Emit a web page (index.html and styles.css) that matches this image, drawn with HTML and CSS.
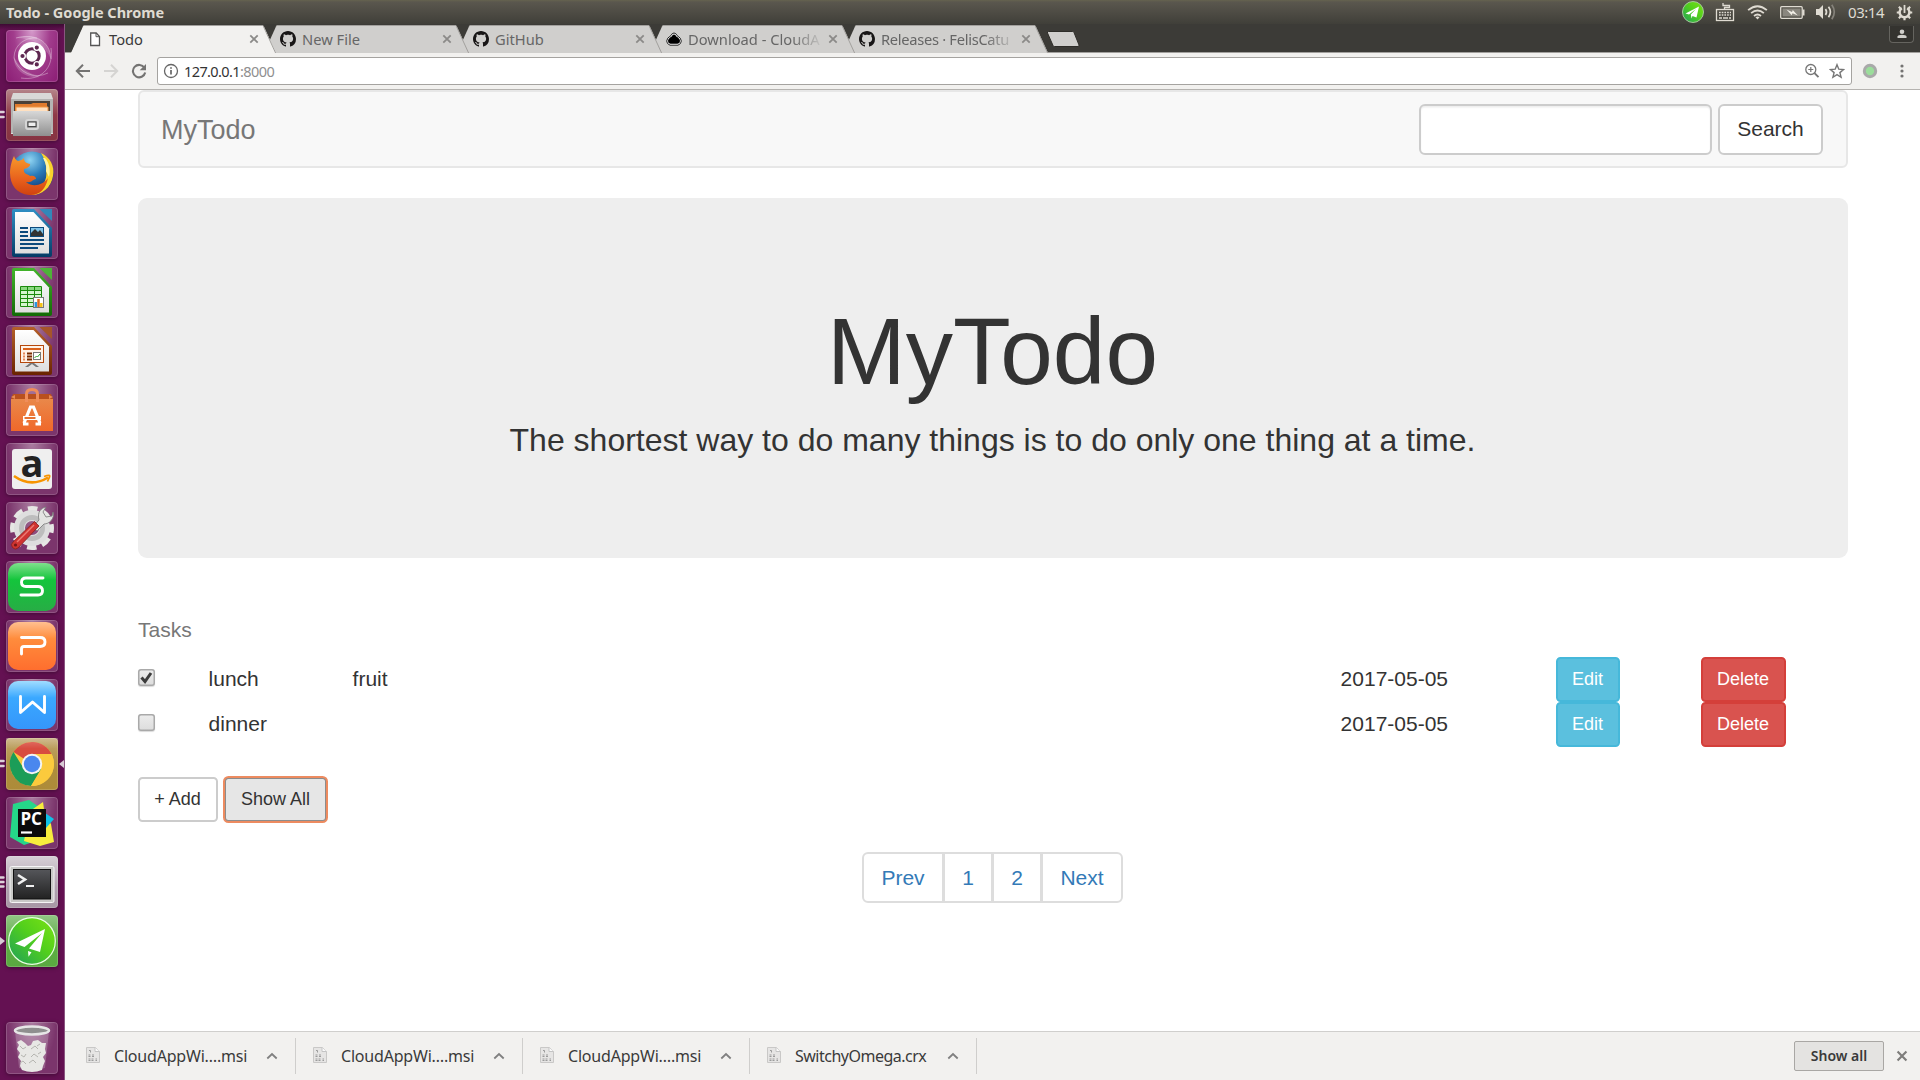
FILE: index.html
```html
<!DOCTYPE html>
<html lang="en">
<head>
<meta charset="utf-8">
<title>Todo</title>
<link rel="stylesheet" href="styles.css">
</head>
<body>
<svg class="defs" width="0" height="0" aria-hidden="true">
  <defs>
    <linearGradient id="gShine" x1="0" y1="0" x2="0" y2="1"><stop offset="0" stop-color="#fff" stop-opacity=".5"/><stop offset=".45" stop-color="#fff" stop-opacity="0"/></linearGradient>
    <linearGradient id="gSteel" x1="0" y1="0" x2="0" y2="1"><stop offset="0" stop-color="#d8d8d8"/><stop offset="1" stop-color="#8f8f8f"/></linearGradient>
    <linearGradient id="gPaper" x1="0" y1="0" x2="0" y2="1"><stop offset="0" stop-color="#fff"/><stop offset="1" stop-color="#dedede"/></linearGradient>
    <radialGradient id="gGlobe" cx=".45" cy=".2" r=".8"><stop offset="0" stop-color="#8fd4f2"/><stop offset=".45" stop-color="#2b7cba"/><stop offset="1" stop-color="#0a2a66"/></radialGradient>
    <linearGradient id="gFox" x1="0" y1="0" x2="0" y2="1"><stop offset="0" stop-color="#f79a2c"/><stop offset=".6" stop-color="#e8601c"/><stop offset="1" stop-color="#cf4210"/></linearGradient>
    <linearGradient id="gBlue" x1="0" y1="0" x2="0" y2="1"><stop offset="0" stop-color="#2f8fc4"/><stop offset="1" stop-color="#043b66"/></linearGradient>
    <linearGradient id="gGreen" x1="0" y1="0" x2="0" y2="1"><stop offset="0" stop-color="#43b52b"/><stop offset="1" stop-color="#126a06"/></linearGradient>
    <linearGradient id="gBrown" x1="0" y1="0" x2="0" y2="1"><stop offset="0" stop-color="#b5602a"/><stop offset="1" stop-color="#6a2400"/></linearGradient>
    <linearGradient id="gBag" x1="0" y1="0" x2="0" y2="1"><stop offset="0" stop-color="#e9884a"/><stop offset="1" stop-color="#f0682a"/></linearGradient>
    <linearGradient id="gWs" x1="0" y1="0" x2="0" y2="1"><stop offset="0" stop-color="#7fe08c"/><stop offset=".35" stop-color="#14c53c"/><stop offset="1" stop-color="#27ad45"/></linearGradient>
    <linearGradient id="gWp" x1="0" y1="0" x2="0" y2="1"><stop offset="0" stop-color="#ffc090"/><stop offset=".35" stop-color="#ff8c3c"/><stop offset="1" stop-color="#ff6e2e"/></linearGradient>
    <linearGradient id="gWw" x1="0" y1="0" x2="0" y2="1"><stop offset="0" stop-color="#a0dcff"/><stop offset=".35" stop-color="#3aa8ff"/><stop offset="1" stop-color="#3596fb"/></linearGradient>
    <linearGradient id="gTg" x1="1" y1="0" x2="0" y2="1"><stop offset="0" stop-color="#7be314"/><stop offset=".45" stop-color="#52cf1c"/><stop offset="1" stop-color="#1d9f5c"/></linearGradient>
    <linearGradient id="gTerm" x1="0" y1="0" x2="0" y2="1"><stop offset="0" stop-color="#55565a"/><stop offset="1" stop-color="#222"/></linearGradient>
    <symbol id="octocat" viewBox="0 0 16 16"><path fill="#181616" d="M8 0C3.58 0 0 3.58 0 8c0 3.54 2.29 6.53 5.47 7.59.4.07.55-.17.55-.38 0-.19-.01-.82-.01-1.49-2.01.37-2.53-.49-2.69-.94-.09-.23-.48-.94-.82-1.13-.28-.15-.68-.52-.01-.53.63-.01 1.08.58 1.23.82.72 1.21 1.87.87 2.33.66.07-.52.28-.87.51-1.07-1.78-.2-3.64-.89-3.64-3.95 0-.87.31-1.59.82-2.15-.08-.2-.36-1.02.08-2.12 0 0 .67-.21 2.2.82.64-.18 1.32-.27 2-.27s1.36.09 2 .27c1.53-1.04 2.2-.82 2.2-.82.44 1.1.16 1.92.08 2.12.51.56.82 1.27.82 2.15 0 3.07-1.87 3.75-3.65 3.95.29.25.54.73.54 1.48 0 1.07-.01 1.93-.01 2.2 0 .21.15.46.55.38A8.01 8.01 0 0 0 16 8c0-4.42-3.58-8-8-8z"/></symbol>
    <symbol id="close" viewBox="0 0 10 10"><path d="M1.3 1.3l7.4 7.4M8.7 1.3l-7.4 7.4" fill="none" stroke="currentColor" stroke-width="1.8"/></symbol>
    <symbol id="tabshape" viewBox="0 0 205 28"><path d="M0 28L12 1.6Q12.600 .5 13.800 .5H191Q192.200 .5 192.800 1.600L205 28" fill="currentColor"/><path d="M12.500 .5H192L204.600 28" fill="none" stroke="#a2a09d" stroke-width="1"/></symbol>
    <symbol id="binfile" viewBox="0 0 14 16"><path d="M.5.5h9l4 4v11H.5z" fill="#e6e5e4" stroke="#c9c8c7"/><path d="M9 .5v4h4.500" fill="#fafafa" stroke="#c4c4c4"/><path d="M3 3.500h1.500v2M2.500 8h2m1.500 0h2M2.500 9.500h2m1.500 0h2M2.500 12h2m1 0h2m2 0h1.500M2.500 13.500h2m1 0h2m2 0h1.500" stroke="#9b9b9b" fill="none"/></symbol>
    <symbol id="chev" viewBox="0 0 12 8"><path d="M1.300 6.500L6 2l4.700 4.500" fill="none" stroke="#808080" stroke-width="1.800"/></symbol>
    <symbol id="pips" viewBox="0 0 5 12"><path d="M0 3h3.500M0 8h3.500" stroke="#ddd2da" stroke-width="2.600" stroke-linecap="round"/></symbol>
  </defs>
</svg>

<div class="desktop">
  <header class="panel">
    <span class="panel-title">Todo - Google Chrome</span>
    <div class="indicators">
      <svg class="ind-tg" viewBox="0 0 22 22"><circle cx="11" cy="11" r="10.500" fill="url(#gTg)" stroke="#a6c79b"/><path d="M3.500 12.500L17 5.500l-2.500 11-4-1.500-1 2.500-.7-4L14 8l-7 5.500z" fill="#fff"/></svg>
      <svg class="ind-kb" viewBox="0 0 20 20"><path d="M9.500 7.500V5.500h5V3.500H8V1" fill="none" stroke="#dfdbd2" stroke-width="1.300"/><rect x="1.500" y="7.500" width="17" height="11" fill="none" stroke="#dfdbd2" stroke-width="1.300"/><path d="M4 10.500h12M4 13h12" stroke="#dfdbd2" stroke-width="1.700" stroke-dasharray="1.700 1"/><path d="M4 16h3m1 0h5m1 0h2" stroke="#dfdbd2" stroke-width="1.600"/></svg>
      <svg class="ind-wifi" viewBox="0 0 22 16"><g fill="none" stroke="#dfdbd2" stroke-width="2"><path d="M1 5.500Q11-3 21 5.500"/><path d="M4.200 8.700Q11 3 17.800 8.700"/><path d="M7.300 11.800Q11 8.500 14.700 11.800"/></g><path d="M8.800 13L11 15.500 13.200 13Q11 11.500 8.800 13z" fill="#dfdbd2"/></svg>
      <svg class="ind-bat" viewBox="0 0 25 13"><rect x=".7" y=".7" width="21.500" height="11.600" rx="1" fill="none" stroke="#dfdbd2" stroke-width="1.300"/><rect x="2.500" y="2.500" width="18" height="8" fill="#8a877f"/><rect x="22.500" y="3.500" width="2" height="6" fill="#dfdbd2"/><path d="M6.500 3.500L12 6l.8-2 5 5.500-5.300-2.300-.8 2z" fill="#f1eee6"/></svg>
      <svg class="ind-snd" viewBox="0 0 20 16"><path d="M0 5h3l4-4v14l-4-4H0z" fill="#dfdbd2"/><g fill="none" stroke="#dfdbd2" stroke-width="1.700"><path d="M9.500 5q2 3 0 6"/><path d="M12.500 2.800q3.800 5.200 0 10.400"/><path d="M15.800 .8q5 7.200 0 14.400" stroke="#85827a"/></g></svg>
      <span class="clock">03:14</span>
      <svg class="ind-gear" viewBox="0 0 18 18"><g fill="none" stroke="#dfdbd2"><path d="M6.200 4.500a5.200 5.200 0 1 0 5.600 0" stroke-width="2.600"/><path d="M9 1v8.500" stroke-width="1.900"/><path d="M3.500 9H.8m16.400 0h-2.700M5 5L3 3m10 2l2-2M5 13l-2 2m10-2l2 2m-6-.5v2.700" stroke-width="2.300"/></g></svg>
    </div>
  </header>

  <aside class="launcher">
    <div class="tile tile-dash"><svg viewBox="0 0 52 52"><g fill="none" stroke="#fff" stroke-opacity=".35"><path d="M42 43A24 24 0 0 1 8 28C8 14 20 7 31 8"/><path d="M15 48C34 51 48 39 45 18"/><path d="M10 8C28 3 44 10 45 29"/></g><path d="M10 8C28 3 44 10 45 29C38 14 27 8 10 8M8 27C7 38 18 49 34 47C22 43 14 38 8 27" fill="#fff" opacity=".2"/><circle cx="26" cy="26" r="14" fill="#fff"/><circle cx="26" cy="26" r="7.200" fill="none" stroke="#5e2750" stroke-width="3"/><g stroke="#fff" stroke-width="1.400" fill="#5e2750"><circle cx="16.500" cy="26" r="2.800"/><circle cx="30.800" cy="17.600" r="2.800"/><circle cx="30.800" cy="34.400" r="2.800"/></g></svg></div>
    <div class="tile tile-files"><svg viewBox="0 0 52 52"><path d="M7 4h38l2 6v35H5V10z" fill="#d9d9d7"/><path d="M5 10h42v34H5z" fill="#b5b5b3"/><path d="M8 12h36v12H8z" fill="#4a4038"/><path d="M9 15h16l2-1h14v9H9z" fill="#e07b2e"/><path d="M10 18h32v5H10z" fill="#ffe0c0" stroke="#f09440"/><path d="M7 22h38v25H7z" fill="url(#gSteel)"/><rect x="20" y="31" width="12" height="9" rx="2" fill="#999" stroke="#d5d5d5" stroke-width="2"/><rect x="22" y="33" width="8" height="4.500" fill="#eee" stroke="#444"/></svg><svg class="pips"><use href="#pips"/></svg></div>
    <div class="tile"><svg viewBox="0 0 52 52"><circle cx="26" cy="25" r="21.500" fill="url(#gGlobe)"/><path d="M35 5C44 9 49 18 47 28C45 41 34 48 24 47C36 42 42 32 40 22C41 17 38 10 35 5z" fill="#f9d22c"/><path d="M39 10C43 14 45 22 43 29L40 23C41 18 39 14 37 10z" fill="#fff3a0"/><path d="M8 8C9 11 10 12 12 13C15 12 16 12 18 10C18 13 19 15 24 16C25 18 20 21 18 21C17 26 22 26 24 28C28 27 30 29 30 31C27 31 26 35 20 34C27 40 37 37 42 30C40 41 33 48 23 47C11 46 4 37 4 25C4 19 6 12 8 8z" fill="url(#gFox)"/></svg></div>
    <div class="tile"><svg viewBox="0 0 52 52"><path d="M8 2h20l18 19v27q0 2-2 2H8q-2 0-2-2V4q0-2 2-2z" fill="url(#gBlue)"/><path d="M9 5h18.500L43 21.500V46.500H9z" fill="url(#gPaper)"/><path d="M33.500 2H46v12z" fill="#3287b9"/><path d="M14 21h8M14 25h8M14 29h8M14 33h24M14 37h24M14 41h18" stroke="#0c4a7c" stroke-width="1.800"/><rect x="24.500" y="20.500" width="13" height="9" fill="#7fc4e8" stroke="#0c4a7c"/><path d="M25 29v-3l4-4 3 3 2-2 3 4v2z" fill="#333"/></svg></div>
    <div class="tile"><svg viewBox="0 0 52 52"><path d="M8 2h20l18 19v27q0 2-2 2H8q-2 0-2-2V4q0-2 2-2z" fill="url(#gGreen)"/><path d="M9 5h18.500L43 21.500V46.500H9z" fill="url(#gPaper)"/><path d="M33.500 2H46v12z" fill="#4eb338"/><path d="M14.500 20.500h21v20h-21z" fill="#d5f5cf" stroke="#1b8a0c"/><path d="M15 21h20v3H15z" fill="#8bd880"/><path d="M14.500 24.500h21m-21 4h21m-21 4h21m-21 4h21M21.500 20.500v20m7-20v20" stroke="#1b8a0c" fill="none"/><rect x="27.500" y="31.500" width="10" height="10" fill="#fff" stroke="#777"/><path d="M29.800 41v-5" stroke="#2b96e0" stroke-width="2.500"/><path d="M32.500 41v-8" stroke="#e06a1c" stroke-width="2.500"/><path d="M35.300 41v-4" stroke="#f5c211" stroke-width="2.500"/></svg></div>
    <div class="tile"><svg viewBox="0 0 52 52"><path d="M8 2h20l18 19v27q0 2-2 2H8q-2 0-2-2V4q0-2 2-2z" fill="url(#gBrown)"/><path d="M9 5h18.500L43 21.500V46.500H9z" fill="url(#gPaper)"/><path d="M33.500 2H46v12z" fill="#a5552a"/><rect x="14.500" y="20.500" width="23" height="17" fill="#fff3e8" stroke="#b5480c"/><path d="M17 24h18" stroke="#d9611b" stroke-width="2"/><path d="M17 28.500h2m-2 3h2m-2 3h2" stroke="#e58a5b" stroke-width="2"/><path d="M21 28.500h5m-5 3h5m-5 3h5" stroke="#7a2c00" stroke-width="2"/><rect x="27.500" y="27.500" width="7" height="7" fill="#fff" stroke="#777"/><path d="M28.500 33l2-2 1 1 2.500-3" stroke="#29a329" fill="none"/><path d="M24 38h4l5 4h-3l-4-3-4 3h-3z" fill="#777"/></svg></div>
    <div class="tile"><svg viewBox="0 0 52 52"><path d="M7 10h38l2 5H5z" fill="#b9501e"/><path d="M5 13l4-2v4zM47 13l-4-2v4z" fill="#e98a50"/><path d="M5 15h42v32H5z" fill="url(#gBag)"/><path d="M20.500 18V10q0-4.500 5.500-4.500T31.500 10v8" fill="none" stroke="#f08d5a" stroke-width="3"/><path d="M18 39l6.500-16h3L34 39m-17 1h5.500m7 0H35" fill="none" stroke="#fff" stroke-width="3.200"/><path d="M17 34h18" stroke="#fff" stroke-width="4"/><path d="M18.500 34h11" stroke="#e5641d" stroke-width="1.800"/></svg></div>
    <div class="tile"><svg viewBox="0 0 52 52"><rect x="6" y="6" width="40" height="40" rx="3" fill="#efefef"/><text x="26" y="33.500" class="amazon-a">a</text><path d="M8 33Q25 45 42 34.500" fill="none" stroke="#f79400" stroke-width="2.600"/><path d="M38 33.500q7-2.500 5.500.5t-2 4.500" fill="none" stroke="#f79400" stroke-width="1.700"/></svg></div>
    <div class="tile"><svg viewBox="0 0 52 52"><circle cx="26" cy="26" r="19.500" fill="none" stroke="#e6e6e4" stroke-width="5" stroke-dasharray="9.500 5.810" stroke-dashoffset="4.700"/><circle cx="26" cy="26" r="12.500" fill="none" stroke="#dedede" stroke-width="11"/><circle cx="26" cy="26" r="10.500" fill="none" stroke="#bdbdbd" stroke-width="5"/><path d="M27 25L33 18C31 10 35 6 40 5L37 10l3 5 6-1 1-4C49 17 43 22 38 22l-7 7z" fill="#e4e4e2" stroke="#777" stroke-width=".8"/><path d="M28.500 19.500l4.500 4.500L12 46Q9 48.500 6.500 45.500T7 40z" fill="#cf3431" stroke="#85201f" stroke-width=".8"/><path d="M28 23L11 40" stroke="#ec7c74" stroke-width="1.500"/><circle cx="9.500" cy="43" r="1.600" fill="#761716"/></svg></div>
    <div class="tile"><svg viewBox="0 0 52 52"><rect x="2" y="2" width="48" height="48" rx="10" fill="url(#gWs)"/><path d="M37 17H20q-4.500 0-4.500 4.200T20 25.500h12q4.500 0 4.500 4.200T32 34H15" fill="none" stroke="#fff" stroke-width="2.900" stroke-linecap="round"/></svg></div>
    <div class="tile"><svg viewBox="0 0 52 52"><rect x="2" y="2" width="48" height="48" rx="10" fill="url(#gWp)"/><path d="M15.500 17.500H34q5 0 5 4.500t-5 4.500H18q-2.500 0-2.500 2.500v5" fill="none" stroke="#fff" stroke-width="2.900" stroke-linecap="round"/></svg></div>
    <div class="tile"><svg viewBox="0 0 52 52"><rect x="2" y="2" width="48" height="48" rx="10" fill="url(#gWw)"/><path d="M14.500 17.500v16L26.500 23l12 10.500v-16" fill="none" stroke="#fff" stroke-width="2.900" stroke-linecap="round" stroke-linejoin="round"/></svg></div>
    <div class="tile tile-chrome"><svg viewBox="0 0 52 52"><circle cx="26" cy="26" r="22" fill="#fbca3d"/><path d="M26 26L45.500 16A22 22 0 0 0 7.500 14z" fill="#d84c3f"/><path d="M7.500 14A22 22 0 0 0 25 48L36 31 18 31z" fill="#1b9d58"/><path d="M26 16h19.500A22 22 0 0 1 25 48L35 31z" fill="#fbca3d"/><circle cx="26" cy="26" r="10.200" fill="#f4f4f4"/><circle cx="26" cy="26" r="8.200" fill="#4a87ee"/><rect x="0" width="52" height="24" fill="url(#gShine)" opacity=".5"/></svg><svg class="pips"><use href="#pips"/></svg><svg class="focus-arrow" viewBox="0 0 5 8"><path d="M5 0v8L0 4z" fill="#d8cbd5"/></svg></div>
    <div class="tile"><svg viewBox="0 0 52 52"><path d="M7 7l16-4 13 9v30l-18 6L4 40z" fill="#25d789"/><path d="M24 14L37 5l2 14 6 8 3 18-14 4-16-5z" fill="#f7ed3d"/><path d="M39 16l9 6-8 9z" fill="#0fc2e8"/><rect x="12" y="12" width="28" height="28" fill="#0b0b0b"/><text x="14.500" y="27.500" class="pycharm-pc">PC</text><path d="M15 35.500h11" stroke="#fff" stroke-width="2.200"/></svg></div>
    <div class="tile tile-terminal"><svg viewBox="0 0 52 52"><rect x="4" y="10.500" width="44" height="36" rx="1.500" fill="#c9c9c7" stroke="#f5f5f5"/><rect x="7.500" y="13.500" width="37" height="29.500" fill="url(#gTerm)" stroke="#111"/><path d="M12 19l7 4.500-7 4.500" fill="none" stroke="#f0f0f0" stroke-width="2.600"/><path d="M20 30h8" stroke="#f0f0f0" stroke-width="2"/></svg><svg class="pips pips-three" viewBox="0 0 5 14"><path d="M0 2.500h3.500M0 7h3.500M0 11.500h3.500" stroke="#ddd2da" stroke-width="2.400" stroke-linecap="round"/></svg></div>
    <div class="tile tile-tg"><svg viewBox="0 0 52 52"><circle cx="26" cy="26" r="23.300" fill="url(#gTg)" stroke="#e9ffe3" stroke-width="1.200"/><path d="M9 28.500L39 14l-5 23-11-3.500L36 18 18.500 32z" fill="#fff"/><path d="M22 36l3.500 1.200-3 4.600z" fill="#fff"/></svg><svg class="run-arrow" viewBox="0 0 5 8"><path d="M0 0v8l5-4z" fill="#d8cbd5"/></svg></div>
    <div class="tile tile-trash"><svg viewBox="0 0 52 52"><path d="M9 9h34l-4 37q-13 4-26 0z" fill="#fff" fill-opacity=".2"/><path d="M11 20l4-2 4 3 3 3 3-1 2-4 5-1 4 3 4 0-1 6 1 4-3 4 2 4-2 5-1 4q-10 4-20 0l-2-4 1-5-3-4 2-4-3-4 2-4z" fill="#e8e8e5"/><path d="M14 24l3 3 3-2m5 2l4-3 3 3m-17 6l3 2 2-3m5 3l3-3 4 3m-18 6l3-2 3 3m3-1l4-3 3 3m1-17l3-2m-2 10l3-2" fill="none" stroke="#b5b5b0"/><ellipse cx="26" cy="8.500" rx="17" ry="4" fill="#8f8f8f" stroke="#e6e6e6" stroke-width="2.500"/></svg></div>
  </aside>

  <div class="browser">
    <div class="tabstrip">
      <div class="tab tab-active"><svg class="tab-bg"><use href="#tabshape"/></svg>
        <svg class="favicon" viewBox="0 0 16 16"><path d="M3.700 2h5.500l3.300 3.500V14.500H3.700z" fill="#fff" stroke="#555" stroke-width="1.300"/><path d="M9 2v3.700h3.500" fill="none" stroke="#555"/></svg>
        <span class="tab-title">Todo</span><svg class="tab-close"><use href="#close"/></svg></div>
      <div class="tab"><svg class="tab-bg"><use href="#tabshape"/></svg><svg class="favicon"><use href="#octocat"/></svg><span class="tab-title">New File</span><svg class="tab-close"><use href="#close"/></svg></div>
      <div class="tab"><svg class="tab-bg"><use href="#tabshape"/></svg><svg class="favicon"><use href="#octocat"/></svg><span class="tab-title">GitHub</span><svg class="tab-close"><use href="#close"/></svg></div>
      <div class="tab"><svg class="tab-bg"><use href="#tabshape"/></svg><svg class="favicon" viewBox="0 0 16 16"><path d="M8 2Q10 2 11 4.500Q15.300 7 15.300 10T12 14.200H4Q.7 13 .7 10T5 4.500Q6 2 8 2z" fill="#fff" stroke="#222"/><path d="M8 3.500q1.500 0 2.300 2Q14 7.500 14 10t-2.500 2.800h-7Q2 12.500 2 10t3.700-4.500Q6.500 3.500 8 3.500z" fill="#000"/></svg><span class="tab-title fade">Download - CloudA</span><svg class="tab-close"><use href="#close"/></svg></div>
      <div class="tab"><svg class="tab-bg"><use href="#tabshape"/></svg><svg class="favicon"><use href="#octocat"/></svg><span class="tab-title tight fade">Releases · FelisCatu</span><svg class="tab-close"><use href="#close"/></svg></div>
      <svg class="newtab" viewBox="0 0 34 16"><path d="M2.500.5h24q1 0 1.500 1l5 12.500q.5 1.500-1 1.500H8.500q-1 0-1.500-1L1.500 2Q1 .5 2.500.5z" fill="#d0cfcd" stroke="#2e2d29"/></svg>
      <div class="profile"><svg viewBox="0 0 10 10"><circle cx="5" cy="2.800" r="2.300" fill="#cfceca"/><path d="M.5 9V7.500Q1 5.700 5 5.700t4.500 1.800V9z" fill="#cfceca"/></svg></div>
    </div>

    <div class="toolbar">
      <svg class="nav-ic" viewBox="0 0 16 16"><path d="M15 8H2M8 1.800L1.800 8 8 14.200" fill="none" stroke="#747372" stroke-width="2"/></svg>
      <svg class="nav-ic" viewBox="0 0 16 16"><path d="M1 8h13M8 1.800L14.200 8 8 14.200" fill="none" stroke="#d5d4d2" stroke-width="2"/></svg>
      <svg class="nav-ic" viewBox="0 0 16 16"><path d="M13.400 4.800A6.200 6.200 0 1 0 14.200 9.500" fill="none" stroke="#747372" stroke-width="2.100"/><path d="M15 1v6.300H8.700z" fill="#747372"/></svg>
      <div class="omnibox">
        <svg class="info" viewBox="0 0 16 16"><circle cx="8" cy="8" r="6.500" fill="none" stroke="#666" stroke-width="1.300"/><path d="M8 7v4.500M8 4.200v1.600" stroke="#666" stroke-width="1.700"/></svg>
        <span class="url">127.0.0.1<span class="port">:8000</span></span>
        <svg class="omni-ic" viewBox="0 0 16 16"><circle cx="6.800" cy="6.500" r="5" fill="none" stroke="#767676" stroke-width="1.300"/><path d="M10.500 10.200l4 4" stroke="#767676" stroke-width="1.900"/><path d="M6.800 4v5M4.300 6.500h5" stroke="#767676" stroke-width="1.200"/></svg>
        <svg class="omni-ic" viewBox="0 0 16 16"><path d="M8 1.700l1.800 4.500 4.800.3-3.700 3.100 1.200 4.700L8 11.700l-4.100 2.600 1.200-4.700L1.400 6.500l4.800-.3z" fill="none" stroke="#767676" stroke-width="1.400"/></svg>
      </div>
      <svg class="ext" viewBox="0 0 16 16"><circle cx="8" cy="8" r="5.700" fill="#9bdd9b" stroke="#a9a9a9" stroke-width="3"/></svg>
      <svg class="menu" viewBox="0 0 4 16"><g fill="#747372"><circle cx="2" cy="3" r="1.600"/><circle cx="2" cy="8" r="1.600"/><circle cx="2" cy="13" r="1.600"/></g></svg>
    </div>

    <main class="page">
      <nav class="navbar">
        <span class="brand">MyTodo</span>
        <input class="search-input" type="text" aria-label="Search">
        <button class="btn btn-search">Search</button>
      </nav>
      <section class="jumbotron">
        <h1>MyTodo</h1>
        <p>The shortest way to do many things is to do only one thing at a time.</p>
      </section>
      <section class="tasks">
        <div class="caption">Tasks</div>
        <div class="row">
          <span class="check"><svg viewBox="0 0 17 17"><path d="M3.500 8.500l3.500 4 6-8.500" fill="none" stroke="#3c3c3c" stroke-width="3"/></svg></span>
          <span class="cell">lunch</span><span class="cell">fruit</span><span class="cell">2017-05-05</span>
          <button class="btn btn-sm btn-info">Edit</button><button class="btn btn-sm btn-danger">Delete</button>
        </div>
        <div class="row">
          <span class="check"></span>
          <span class="cell">dinner</span><span class="cell"></span><span class="cell">2017-05-05</span>
          <button class="btn btn-sm btn-info">Edit</button><button class="btn btn-sm btn-danger">Delete</button>
        </div>
      </section>
      <div class="actions">
        <button class="btn btn-sm btn-add">+ Add</button>
        <button class="btn btn-sm btn-showall">Show All</button>
      </div>
      <div class="pagination"><a class="pg-word">Prev</a><a>1</a><a>2</a><a class="pg-word">Next</a></div>
    </main>

    <footer class="downloads">
      <div class="dl"><svg class="dl-icon"><use href="#binfile"/></svg><span class="dl-name">CloudAppWi….msi</span><svg class="dl-chev"><use href="#chev"/></svg></div>
      <div class="dl"><svg class="dl-icon"><use href="#binfile"/></svg><span class="dl-name">CloudAppWi….msi</span><svg class="dl-chev"><use href="#chev"/></svg></div>
      <div class="dl"><svg class="dl-icon"><use href="#binfile"/></svg><span class="dl-name">CloudAppWi….msi</span><svg class="dl-chev"><use href="#chev"/></svg></div>
      <div class="dl"><svg class="dl-icon"><use href="#binfile"/></svg><span class="dl-name dl-crx">SwitchyOmega.crx</span><svg class="dl-chev"><use href="#chev"/></svg></div>
      <button class="dl-all">Show all</button>
      <svg class="dl-close"><use href="#close"/></svg>
    </footer>
  </div>
</div>
</body>
</html>
```
FILE: styles.css
```css
* { box-sizing: border-box; }
body { margin: 0; width: 1920px; height: 1080px; overflow: hidden; font-family: "Noto Sans", "Open Sans", sans-serif; }
svg { display: block; flex: none; }
button, input { margin: 0; font-family: inherit; }
.defs { position: absolute; }

.desktop { display: grid; grid-template: 24px 1056px / 65px 1855px; width: 1920px; height: 1080px; }

/* Top panel */
.panel { grid-column: 1 / 3; display: flex; align-items: center; justify-content: space-between; padding: 0 7px 0 6px; background: linear-gradient(#65634f 0, #5a574e 2px, #403f39 100%); color: #dfdbd2; }
.panel-title { font-size: 14.500px; font-weight: 700; line-height: 24px; white-space: nowrap; }
.indicators { display: flex; align-items: center; height: 24px; }
.ind-tg { width: 22px; height: 22px; margin-right: 11px; }
.ind-kb { width: 20px; height: 20px; margin-right: 12px; }
.ind-wifi { width: 21px; height: 15px; margin-right: 12px; }
.ind-bat { width: 25px; height: 13px; margin-right: 11px; }
.ind-snd { width: 20px; height: 16px; margin-right: 12px; }
.clock { width: 37px; margin-right: 11px; font-size: 15px; line-height: 24px; letter-spacing: -.45px; }
.ind-gear { width: 17px; height: 17px; }

/* Launcher */
.launcher { display: flex; flex-direction: column; gap: 7px; padding: 6px 0 6px 6px; background: linear-gradient(#3d0a33 0, #641152 6px); border-right: 1px solid #8a5580; }
.tile { position: relative; flex: none; width: 52px; height: 52px; border-radius: 4px; background: radial-gradient(ellipse at 50% 0, rgba(255,255,255,.42), rgba(255,255,255,.1) 65%), rgba(255,255,255,.06); box-shadow: inset 0 0 0 1px rgba(255,255,255,.16), 0 1px 4px rgba(0,0,0,.35); }
.tile > svg:first-child { width: 52px; height: 52px; }
.tile-dash { background: radial-gradient(ellipse at 50% 0, #d59acb, #a13c8c 50%, #8b1c74); }
.tile-files { background: linear-gradient(#b5858a, #8f3947 50%, #863442); }
.tile-chrome { background: linear-gradient(#c1a56b, #ad8d3c 60%, #ad8b39); }
.tile-terminal { background: linear-gradient(#d7d0d6, #b0a2af 60%, #a798a5); }
.tile-tg { background: linear-gradient(#92c685, #5cae42 55%, #5aa941); }
.tile-trash { margin-top: 48px; }
.pips { position: absolute; left: -6px; top: 20px; width: 5px; height: 12px; }
.pips-three { top: 19px; height: 14px; }
.focus-arrow { position: absolute; left: 53px; top: 22px; width: 5px; height: 8px; }
.run-arrow { position: absolute; left: -6px; top: 22px; width: 5px; height: 8px; }
.amazon-a { font: 700 38px "Open Sans", sans-serif; text-anchor: middle; fill: #222; }
.pycharm-pc { font: 700 17px "Open Sans", sans-serif; fill: #fff; letter-spacing: -.2px; }

/* Browser window */
.browser { display: flex; flex-direction: column; min-width: 0; }
.tabstrip { display: flex; height: 29px; padding: 1px 6px 0 6px; background: #3c3b37; border-bottom: 1px solid #a2a09d; }
.tab { position: relative; display: flex; align-items: center; width: 205px; height: 28px; margin-right: -12px; padding: 0 17px 0 16px; color: #d0cfcd; z-index: 1; }
.tab:nth-child(2) { z-index: 4; }
.tab:nth-child(3) { z-index: 3; }
.tab:nth-child(4) { z-index: 2; }
.tab-active { color: #f2f1ef; z-index: 5; box-shadow: 0 0 0 transparent; }
.tab-bg { position: absolute; left: 0; top: 0; width: 205px; height: 28px; z-index: -1; }
.tab-active .tab-bg { height: 28px; border-bottom: 0; filter: drop-shadow(0 1px 0 #f2f1ef); }
.favicon { width: 16px; height: 16px; margin-right: 6px; }
.tab-title { flex: 1; min-width: 0; font-size: 14.700px; line-height: 20px; white-space: nowrap; color: #666; }
.tab-active .tab-title { color: #3a3a3a; }
.tight { letter-spacing: -.3px; }
.fade { -webkit-mask-image: linear-gradient(90deg, #000 104px, transparent 136px); mask-image: linear-gradient(90deg, #000 104px, transparent 136px); }
.tab-close { width: 10px; height: 10px; color: #8b8a88; }
.newtab { width: 34px; height: 16px; margin: 6px 0 0 10px; }
.profile { display: flex; justify-content: center; align-items: center; width: 25px; height: 17px; margin: 1px 0 0 auto; border: 1px solid #65645f; border-top: 0; border-radius: 0 0 4px 4px; background: #34332f; }
.profile svg { width: 10px; height: 10px; }

.toolbar { display: flex; align-items: center; height: 37px; padding: 0 16px 1px 10px; background: #f2f1ef; border-bottom: 1px solid #b5b3b0; }
.nav-ic { width: 16px; height: 16px; margin-right: 12px; }
.nav-ic:nth-child(3) { margin-right: 10px; }
.omnibox { flex: 1; display: flex; align-items: center; height: 28px; padding: 0 6px 0 5px; background: #fff; border: 1px solid #a5a3a0; border-radius: 3px; }
.info { width: 16px; height: 16px; margin-right: 5px; }
.url { flex: 1; font-size: 14.500px; line-height: 20px; letter-spacing: -.6px; color: #333; }
.port { color: #8f8f8f; }
.omni-ic { width: 16px; height: 16px; margin-left: 9px; }
.ext { width: 16px; height: 16px; margin-left: 10px; }
.menu { width: 4px; height: 16px; margin-left: 22px; }

/* Page */
.page { flex: 1; min-height: 0; padding: 0 72px 0 73px; background: #fff; font-family: "Liberation Sans", Arial, sans-serif; font-size: 21px; line-height: 30px; color: #333; }
.btn { padding: 0; border: 2px solid #ccc; border-radius: 6px; background: #fff; color: #333; font-family: inherit; font-size: 21px; line-height: 30px; text-align: center; }
.btn-sm { height: 45px; font-size: 18px; line-height: 27px; border-radius: 4.500px; }
.navbar { display: flex; align-items: center; height: 78px; padding: 0 23px 0 21px; background: #f8f8f8; border: 2px solid #e7e7e7; border-radius: 6px; }
.brand { flex: 1; padding-top: 2px; font-size: 27px; color: #777; }
.search-input { width: 293px; height: 51px; margin-right: 6px; border: 2px solid #ccc; border-radius: 6px; background: #fff; box-shadow: inset 0 1.500px 1.500px rgba(0,0,0,.075); }
.btn-search { width: 105px; height: 51px; }
.jumbotron { height: 360px; margin-top: 30px; padding-top: 101px; border-radius: 9px; background: #eee; text-align: center; }
.jumbotron h1 { margin: 0; padding-right: 1px; font-size: 94.500px; line-height: 104px; font-weight: 400; }
.jumbotron p { margin: 15px 0 0; padding-right: 1px; font-size: 32px; line-height: 45px; }
.tasks { margin-top: 57px; }
.caption { height: 42px; color: #777; }
.row { display: grid; grid-template-columns: 70px 144px 988px 216px 145px auto; align-items: center; justify-items: start; height: 45px; }
.cell { padding: 0 0 2px .6px; }
.row .btn-info { width: 64px; padding-right: 1px; background: #5bc0de; border-color: #46b8da; color: #fff; }
.row .btn-danger { width: 85px; padding-right: 1px; background: #d9534f; border-color: #d43f3a; color: #fff; }
.check { width: 17px; height: 17px; margin-top: -5px; border-radius: 3px; background: linear-gradient(#ededed, #dcdcdc); box-shadow: inset 0 0 0 1.500px #a9a9a9, 0 1px 1px rgba(0,0,0,.15); }
.actions { display: flex; gap: 6px; margin-top: 30px; }
.btn-add { width: 80px; padding-right: 1px; }
.btn-showall { width: 103px; background: #e6e6e6; border-color: #8c8c8c; outline: 2px solid #ed8b60; outline-offset: -1px; }
.pagination { display: flex; width: 261px; height: 51px; margin: 30px 0 0 724px; border: 2px solid #ddd; border-radius: 6px; color: #337ab7; line-height: 47px; text-align: center; }
.pagination a { width: 49px; border-left: 3px solid #ddd; }
.pagination a.pg-word { flex: 1; }
.pagination a:first-child { border-left: 0; }

/* Download shelf */
.downloads { display: flex; align-items: center; height: 49px; padding-right: 12px; background: #f2f1ef; border-top: 1px solid #d0cfcd; }
.dl { display: flex; align-items: center; width: 227px; height: 36px; padding: 0 17px; border-right: 1px solid #cfcecc; }
.dl:first-child { width: 231px; padding-left: 21px; }
.dl-icon { width: 14px; height: 16px; margin: -2px 14px 0 0; }
.dl-name { flex: 1; font-size: 16px; line-height: 20px; letter-spacing: -.2px; white-space: nowrap; color: #3a3a3a; }
.dl-crx { letter-spacing: -.5px; }
.dl-chev { width: 12px; height: 8px; }
.dl-all { width: 90px; height: 30px; margin: 0 12px 0 auto; padding: 0 0 2px; border: 1px solid #a9a7a4; border-radius: 2px; background: #e4e3e1; color: #3a3a3a; font-size: 14px; font-weight: 600; }
.dl-close { width: 12px; height: 12px; color: #7e7d7b; }
```
